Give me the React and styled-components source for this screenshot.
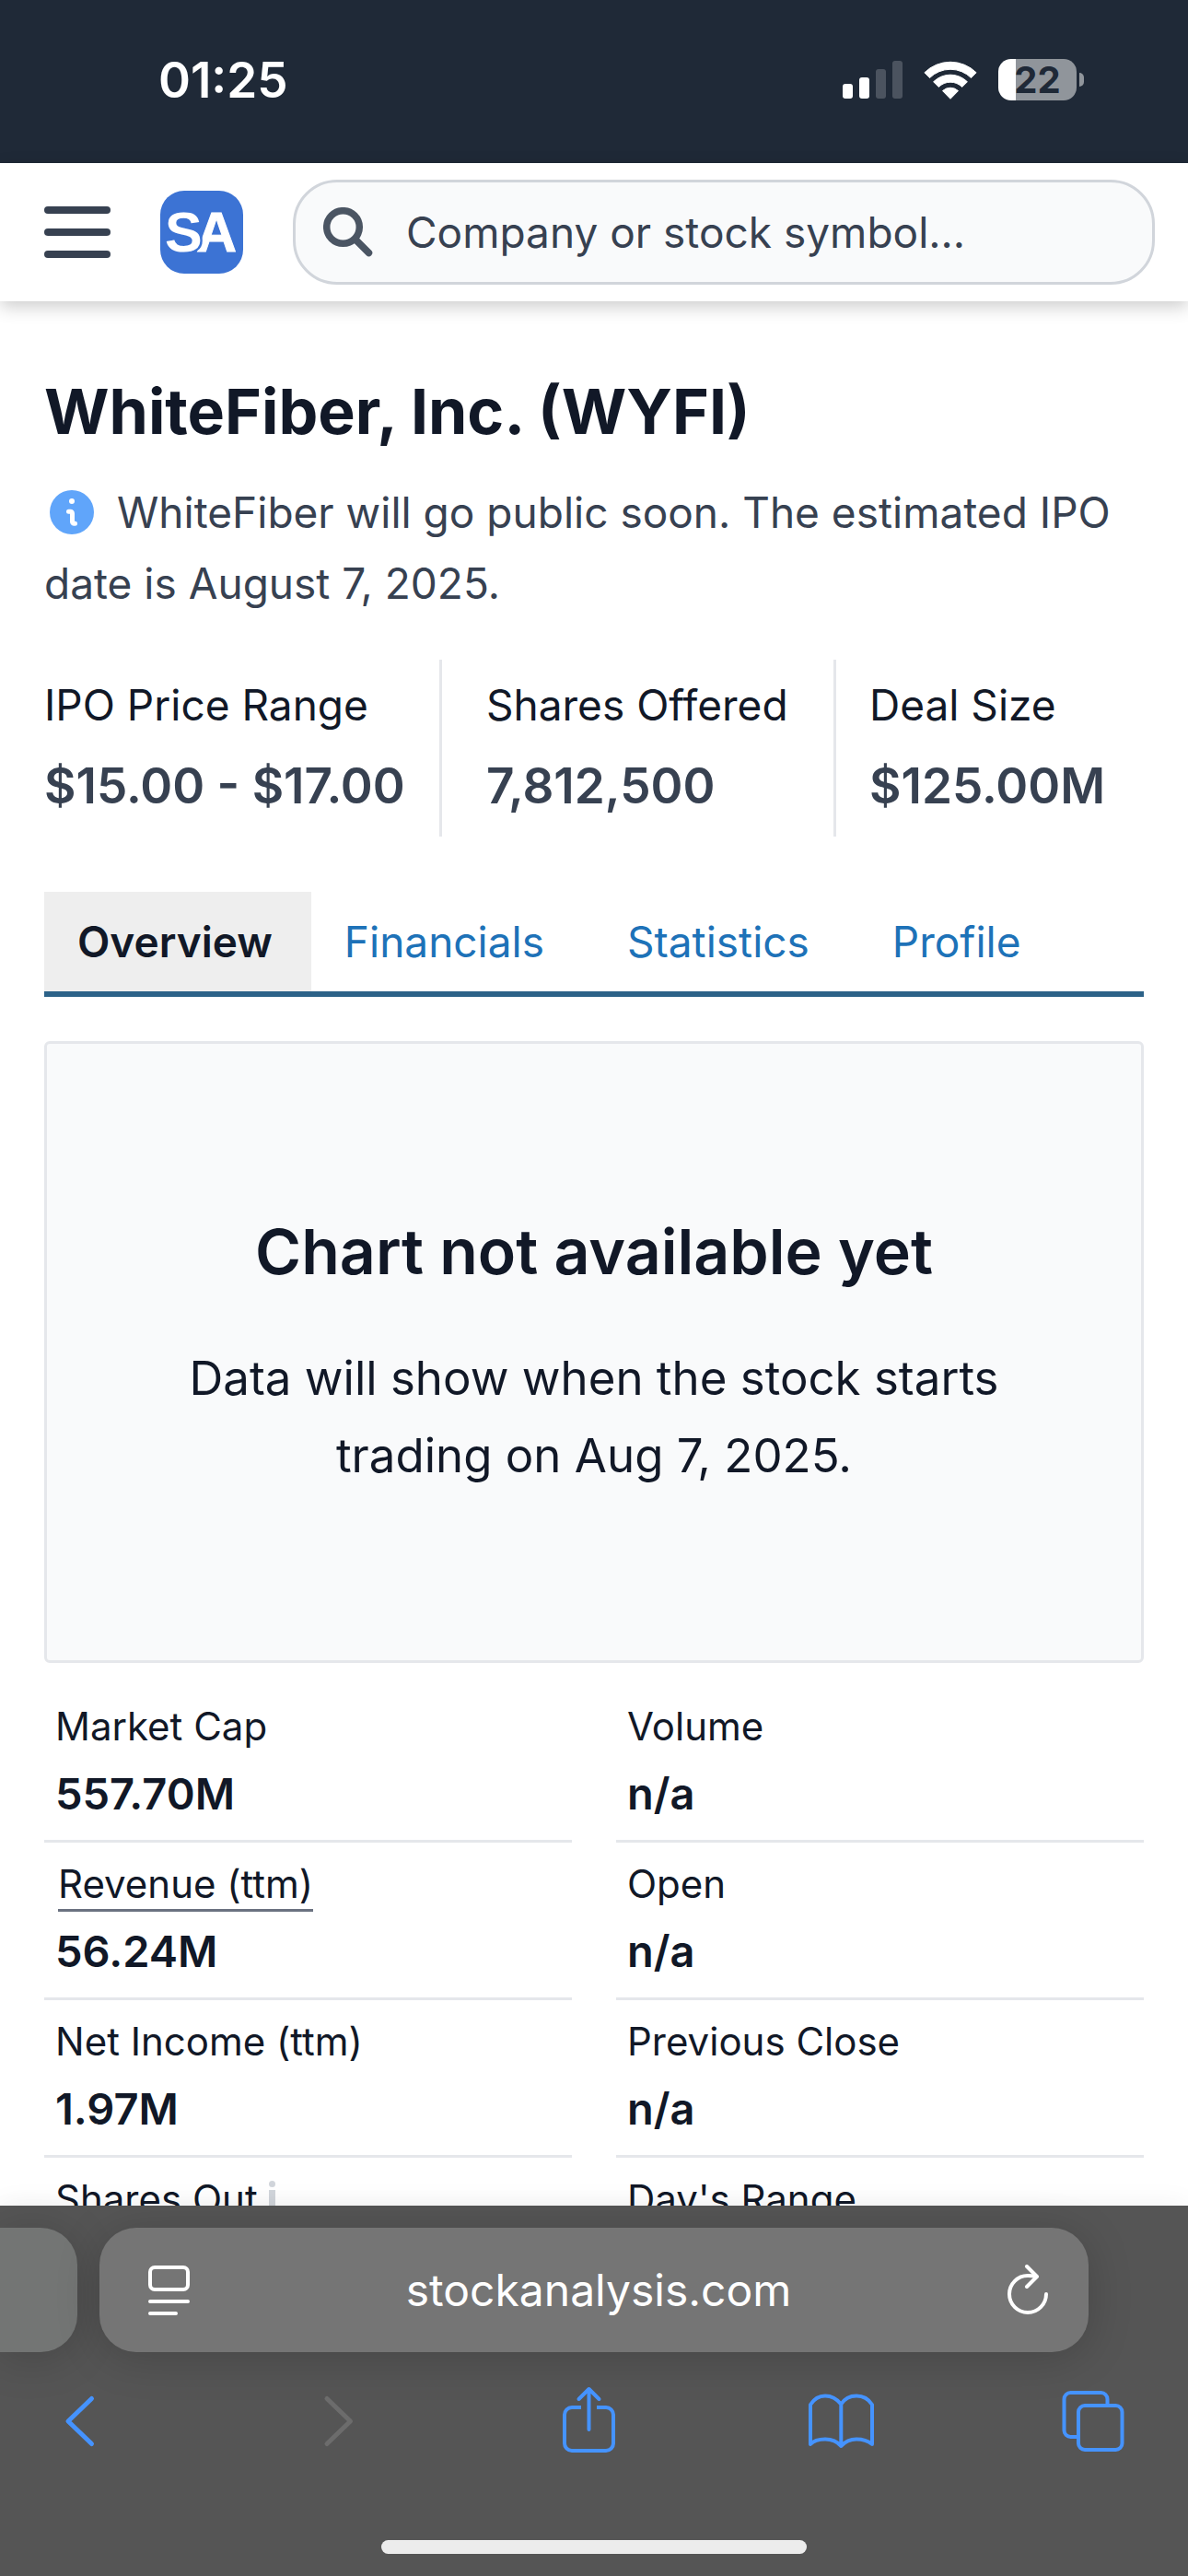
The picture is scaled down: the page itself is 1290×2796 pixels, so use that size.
import React from 'react';
import styled, { createGlobalStyle } from 'styled-components';

const GlobalStyle = createGlobalStyle`
  * {
    box-sizing: border-box;
  }

  body {
    margin: 0;
    background: #fff;
    color: #111827;
    font-family: Inter, 'Liberation Sans', sans-serif;
  }

  button {
    padding: 0;
    border: none;
    background: none;
    cursor: pointer;
  }

  svg {
    display: block;
    flex: none;
  }
`;

const Screen = styled.div`
  display: flex;
  flex-direction: column;
  height: 100vh;
  overflow: hidden;
`;

const StatusBar = styled.div`
  display: flex;
  flex: none;
  align-items: center;
  justify-content: space-between;
  height: 177px;
  padding: 0 113px 4px 172px;
  background: #1f2937;
  color: #fff;
`;

const Clock = styled.time`
  font-size: 53px;
  font-weight: 600;
  line-height: 64px;
`;

const StatusIcons = styled.div`
  display: flex;
  align-items: center;
  gap: 23px;
`;

const Battery = styled.div`
  display: flex;
  align-items: center;
  gap: 3px;

  &::after {
    content: '';
    width: 5px;
    height: 15px;
    border-radius: 0 8px 8px 0;
    background: #90959b;
  }
`;

const BatteryLevel = styled.div`
  width: 85px;
  height: 45px;
  border-radius: 14px;
  background: linear-gradient(90deg, #fff 19px, #90959b 19px);
  color: #1f2937;
  font-size: 40px;
  font-weight: 700;
  line-height: 45px;
  text-align: center;
`;

const Header = styled.header`
  position: relative;
  display: flex;
  flex: none;
  align-items: center;
  height: 150px;
  padding: 0 36px 0 48px;
  background: #fff;
  box-shadow: 0 6px 18px rgba(0, 0, 0, 0.2);
`;

const MenuButton = styled.button`
  display: flex;
  flex-direction: column;
  gap: 16px;
  width: 72px;
  margin-right: 54px;

  span {
    height: 8px;
    border-radius: 4px;
    background: #374151;
  }
`;

const LogoLink = styled.a`
  margin-right: 54px;
`;

const SearchBox = styled.label`
  display: flex;
  flex: 1;
  align-items: center;
  gap: 36px;
  height: 114px;
  padding: 0 30px;
  border: 3px solid #d1d5db;
  border-radius: 48px;
  background: #f9fafb;
`;

const SearchInput = styled.input`
  flex: 1;
  min-width: 0;
  padding: 0;
  border: none;
  outline: none;
  background: transparent;
  color: #374151;
  font-family: inherit;
  font-size: 46px;
  line-height: 72px;

  &::placeholder {
    color: #374151;
    opacity: 1;
  }
`;

const Main = styled.main`
  flex: 1;
  min-height: 0;
  padding: 74px 48px 0;
  overflow: hidden;
`;

const Title = styled.h1`
  margin: 0 0 27px;
  font-size: 68px;
  font-weight: 700;
  line-height: 90px;
`;

const Notice = styled.p`
  margin: 0 0 44px;
  color: #374151;
  font-size: 46px;
  line-height: 77px;

  svg {
    display: inline-block;
    margin: 0 25px 0 6px;
    vertical-align: -7px;
  }
`;

const OfferGrid = styled.dl`
  display: grid;
  grid-template-columns: 432fr 428fr 334fr;
  margin: 0 0 60px;
`;

const Offer = styled.div`
  padding: 13px 0 13px ${({ $indent }) => $indent || 0}px;
  border-right: ${({ $last }) => ($last ? 'none' : '3px solid #e5e7eb')};
  white-space: nowrap;

  dt {
    font-size: 46px;
    line-height: 72px;
  }

  dd {
    margin: 10px 0 0;
    color: #374151;
    font-size: 53px;
    font-weight: 600;
    line-height: 84px;
  }
`;

const Tabs = styled.nav`
  display: flex;
  gap: 12px;
  margin-bottom: 48px;
  border-bottom: 6px solid #2c6288;
`;

const Tab = styled.a`
  padding: 18px 42px 18px 36px;
  background: ${({ $active }) => ($active ? '#eee' : 'transparent')};
  color: ${({ $active }) => ($active ? '#111827' : '#1d72b8')};
  font-size: 46px;
  font-weight: ${({ $active }) => ($active ? 600 : 400)};
  line-height: 72px;
  text-decoration: none;

  &:first-child {
    margin-right: -12px;
  }
`;

const ChartBox = styled.section`
  display: flex;
  flex-direction: column;
  align-items: center;
  justify-content: center;
  min-height: 675px;
  margin-bottom: 24px;
  padding: 0 108px;
  border: 3px solid #e5e7eb;
  border-radius: 6px;
  background: #f9fafb;
  text-align: center;

  h2 {
    margin: 0 0 51px;
    font-size: 68px;
    font-weight: 600;
    line-height: 90px;
  }

  p {
    margin: 0;
    font-size: 51px;
    line-height: 84px;
  }
`;

const Stats = styled.div`
  display: grid;
  grid-template-columns: 1fr 1fr;
  gap: 48px;
`;

const StatTable = styled.table`
  display: block;
  border-spacing: 0;

  tbody,
  tr,
  th,
  td {
    display: block;
    padding: 0;
    text-align: left;
  }

  tr {
    padding: 13px 12px 14px;
    border-bottom: 3px solid #e5e7eb;
  }

  th {
    font-size: 42px;
    font-weight: 400;
    line-height: 63px;
  }

  td {
    margin-top: 6px;
    font-size: 47px;
    font-weight: 600;
    line-height: 72px;
  }

  svg {
    display: inline-block;
    margin-left: 12px;
    vertical-align: 8px;
  }
`;

const Term = styled.span`
  margin-left: 3px;
  padding-bottom: 2px;
  border-bottom: 3px solid #6b7280;
`;

const BrowserBar = styled.footer`
  position: relative;
  flex: none;
  padding: 24px 0;
  background: #555;
  box-shadow: 0 0 30px rgba(0, 0, 0, 0.06);
`;

const AddressRow = styled.div`
  display: flex;
  gap: 24px;
  padding-right: 108px;
`;

const AddressPill = styled.div`
  display: flex;
  flex: 1;
  align-items: center;
  justify-content: space-between;
  height: 135px;
  padding: 0 43px 0 53px;
  border-radius: 40px;
  background: #757575;
  box-shadow: 0 6px 48px rgba(0, 0, 0, 0.18);
  color: #fff;
  font-size: 48px;
`;

const PreviousPill = styled.div`
  width: 84px;
  height: 135px;
  border-radius: 0 40px 40px 0;
  background: #737574;
  box-shadow: 0 6px 48px rgba(0, 0, 0, 0.18);
`;

const Toolbar = styled.div`
  position: relative;
  display: flex;
  justify-content: space-between;
  padding: 27px 55px 81px 38px;
`;

const HomeIndicator = styled.div`
  width: 462px;
  height: 15px;
  margin: 0 auto;
  border-radius: 8px;
  background: #ececec;
`;

const offers = [
  { label: 'IPO Price Range', value: '$15.00 - $17.00' },
  { label: 'Shares Offered', value: '7,812,500', indent: 48 },
  { label: 'Deal Size', value: '$125.00M', indent: 36 },
];

const tabs = ['Overview', 'Financials', 'Statistics', 'Profile'];

const leftStats = [
  { label: 'Market Cap', value: '557.70M' },
  { label: 'Revenue (ttm)', value: '56.24M', underlined: true },
  { label: 'Net Income (ttm)', value: '1.97M' },
  { label: 'Shares Out', hint: true },
];

const rightStats = [
  { label: 'Volume', value: 'n/a' },
  { label: 'Open', value: 'n/a' },
  { label: 'Previous Close', value: 'n/a' },
  { label: "Day's Range" },
];

const SignalIcon = () => (
  <svg width="65" height="41" viewBox="0 0 65 41" fill="#fff">
    <rect x="0" y="25" width="11" height="16" rx="3" />
    <rect x="18" y="18" width="11" height="23" rx="3" />
    <rect x="36" y="9" width="11" height="32" rx="3" opacity="0.2" />
    <rect x="54" y="0" width="11" height="41" rx="3" opacity="0.2" />
  </svg>
);

const WifiIcon = () => (
  <svg width="58" height="42" viewBox="0 0 58 42" fill="#fff" stroke="#fff" strokeWidth="1" strokeLinejoin="round">
    <path d="M.9 12.8A40 40 0 0 1 57.1 12.8L51.5 18.5A32 32 0 0 0 6.5 18.5Z" />
    <path d="M10.6 22.8A26 26 0 0 1 47.4 22.8L41.7 28.4A18 18 0 0 0 16.3 28.4Z" />
    <path d="M20.5 32.6A12.5 12.5 0 0 1 37.5 32.6L29 41.3Z" />
  </svg>
);

const Logo = () => (
  <svg width="90" height="90" viewBox="0 0 90 90" fontFamily="'Liberation Sans', sans-serif" fontSize="61" fontWeight="700">
    <rect width="90" height="90" rx="26" fill="#3c73d4" />
    <text x="39" y="66" fill="#fff" stroke="#fff" strokeWidth="1">A</text>
    <text x="5" y="66" fill="#fff" stroke="#3c73d4" strokeWidth="5" paintOrder="stroke">S</text>
  </svg>
);

const SearchIcon = () => (
  <svg width="54" height="54" viewBox="0 0 54 54" fill="none" stroke="#4b5563" strokeWidth="7.5" strokeLinecap="round">
    <circle cx="21.5" cy="21.5" r="17.8" />
    <path d="M34.5 34.5 49.5 49.5" />
  </svg>
);

const InfoIcon = () => (
  <svg width="48" height="48" viewBox="0 0 48 48" fill="none">
    <circle cx="24" cy="24" r="24" fill="#60a5fa" />
    <circle cx="24" cy="12" r="3" fill="#fff" />
    <path d="M20.5 23.3h2a2 2 0 0 1 2 2v9a2 2 0 0 0 2 2h1" stroke="#fff" strokeWidth="5" strokeLinecap="round" strokeLinejoin="round" />
  </svg>
);

const HintIcon = () => (
  <svg width="7" height="27" viewBox="0 0 7 27" fill="#d1d5db">
    <circle cx="3.5" cy="3.5" r="3.5" />
    <rect y="10" width="7" height="17" />
  </svg>
);

const ReaderIcon = () => (
  <svg width="45" height="54" viewBox="0 0 45 54" fill="none" stroke="#fff" strokeWidth="4" strokeLinecap="round">
    <rect x="2" y="2" width="41" height="24" rx="5" />
    <path d="M2 39h41M2 52h28" />
  </svg>
);

const ReloadIcon = () => (
  <svg width="45" height="55" viewBox="0 0 45 55" fill="none" stroke="#fff" strokeWidth="4" strokeLinecap="round" strokeLinejoin="round">
    <path d="M42 32A20 20 0 1 1 22 12Q27 12 31 13" />
    <path d="M21 2 32 13 21 24" />
  </svg>
);

const ToolIcon = ({ color = '#4593ff', width = 4, children }) => (
  <svg width="96" height="96" viewBox="0 0 96 96" fill="none" stroke={color} strokeWidth={width} strokeLinecap="round" strokeLinejoin="round">
    {children}
  </svg>
);

const StatList = ({ rows }) => (
  <StatTable>
    <tbody>
      {rows.map(({ label, value, underlined, hint }) => (
        <tr key={label}>
          <th scope="row">
            {underlined ? <Term>{label}</Term> : label}
            {hint && <HintIcon />}
          </th>
          {value && <td>{value}</td>}
        </tr>
      ))}
    </tbody>
  </StatTable>
);

const App = () => {
  return (
    <Screen>
      <GlobalStyle />

      <StatusBar>
        <Clock>01:25</Clock>
        <StatusIcons>
          <SignalIcon />
          <WifiIcon />
          <Battery>
            <BatteryLevel>22</BatteryLevel>
          </Battery>
        </StatusIcons>
      </StatusBar>

      <Header>
        <MenuButton aria-label="Menu">
          <span />
          <span />
          <span />
        </MenuButton>
        <LogoLink href="#" aria-label="Home">
          <Logo />
        </LogoLink>
        <SearchBox>
          <SearchIcon />
          <SearchInput type="text" aria-label="Search" placeholder="Company or stock symbol..." />
        </SearchBox>
      </Header>

      <Main>
        <Title>WhiteFiber, Inc. (WYFI)</Title>
        <Notice>
          <InfoIcon />
          WhiteFiber will go public soon. The estimated IPO date is August 7, 2025.
        </Notice>

        <OfferGrid>
          {offers.map(({ label, value, indent }, index) => (
            <Offer key={label} $indent={indent} $last={index === offers.length - 1}>
              <dt>{label}</dt>
              <dd>{value}</dd>
            </Offer>
          ))}
        </OfferGrid>

        <Tabs>
          {tabs.map((tab) => (
            <Tab key={tab} href="#" $active={tab === 'Overview'}>
              {tab}
            </Tab>
          ))}
        </Tabs>

        <ChartBox>
          <h2>Chart not available yet</h2>
          <p>Data will show when the stock starts trading on Aug 7, 2025.</p>
        </ChartBox>

        <Stats>
          <StatList rows={leftStats} />
          <StatList rows={rightStats} />
        </Stats>
      </Main>

      <BrowserBar>
        <AddressRow>
          <PreviousPill />
          <AddressPill>
            <button aria-label="Page settings">
              <ReaderIcon />
            </button>
            <span>stockanalysis.com</span>
            <button aria-label="Reload">
              <ReloadIcon />
            </button>
          </AddressPill>
        </AddressRow>

        <Toolbar>
          <button aria-label="Back">
            <ToolIcon width={5}>
              <path d="M61.5 23.5 36 48l25.5 24.5" />
            </ToolIcon>
          </button>
          <button aria-label="Forward">
            <ToolIcon width={5} color="#6c6c6c">
              <path d="M42 23.5 67.5 48 42 72.5" />
            </ToolIcon>
          </button>
          <button aria-label="Share">
            <ToolIcon>
              <path d="M42 33H32a8 8 0 0 0-8 8v31a8 8 0 0 0 8 8h37a8 8 0 0 0 8-8V41a8 8 0 0 0-8-8H59" strokeLinecap="butt" />
              <path d="M50.5 57V13M39.5 24l11-11 11 11" />
            </ToolIcon>
          </button>
          <button aria-label="Bookmarks">
            <ToolIcon>
              <path d="M16 73V30Q22 20.5 32 20.5T49.3 29.5Q55 20.5 66 20.5T83 30V73Q76 67.5 66 67.5T49.3 75Q43 67.5 32 67.5T16 73ZM49.3 29.5V75" />
            </ToolIcon>
          </button>
          <button aria-label="Tabs">
            <ToolIcon>
              <rect x="32" y="31" width="47.5" height="48" rx="7" />
              <path d="M63.5 30V24a7 7 0 0 0-7-7H23.5a7 7 0 0 0-7 7V58a7 7 0 0 0 7 7H31" strokeLinecap="butt" />
            </ToolIcon>
          </button>
        </Toolbar>

        <HomeIndicator />
      </BrowserBar>
    </Screen>
  );
};

export default App;
